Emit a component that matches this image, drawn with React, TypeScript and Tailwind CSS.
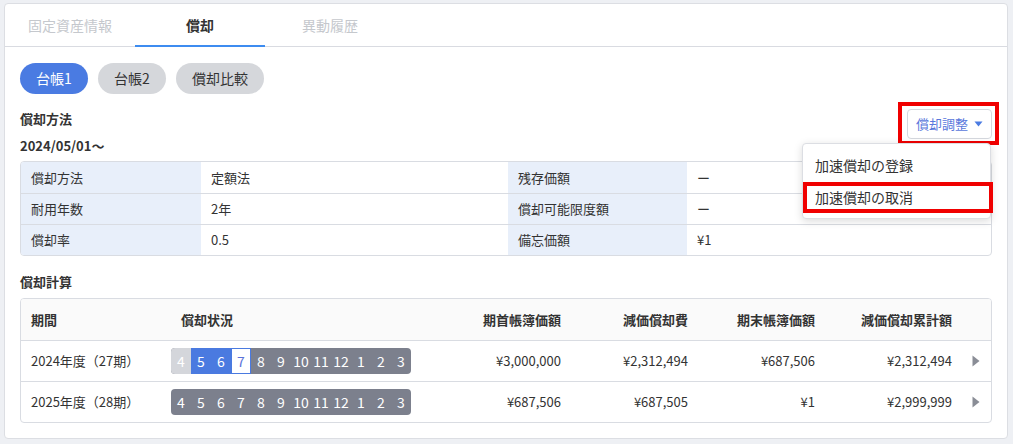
import React from 'react';

const months = ['4', '5', '6', '7', '8', '9', '10', '11', '12', '1', '2', '3'];

const MonthBar: React.FC<{ current?: boolean }> = ({ current }) => (
  <div className="flex h-[26px] w-[240px] overflow-hidden rounded-[4px] bg-[#7c808d]">
    {months.map((m, i) => {
      let cls = 'text-white';
      if (current) {
        if (i === 0) cls = 'bg-[#d4d6db] text-white';
        else if (i === 1 || i === 2) cls = 'bg-[#4a7ae0] text-white';
        else if (i === 3) cls = 'bg-white text-[#5b72d9] border border-[#4a7ae0]';
      }
      return (
        <div key={i} className={`flex w-[20px] items-center justify-center text-[14px] ${cls}`}>
          {m}
        </div>
      );
    })}
  </div>
);

const infoRows = [
  ['償却方法', '定額法', '残存価額', 'ー'],
  ['耐用年数', '2年', '償却可能限度額', 'ー'],
  ['償却率', '0.5', '備忘価額', '¥1'],
];

const calcRows = [
  { period: '2024年度（27期）', current: true, v: ['¥3,000,000', '¥2,312,494', '¥687,506', '¥2,312,494'] },
  { period: '2025年度（28期）', current: false, v: ['¥687,506', '¥687,505', '¥1', '¥2,999,999'] },
];

const gridCols = 'grid grid-cols-[150px_260px_140px_127px_127px_137px_1fr]';

export default function App() {
  return (
    <div
      className="min-h-[444px] bg-[#eef0f4] pl-[4px] pr-[5px] pt-[3px] text-[#333] text-[13px]"
      style={{ fontFamily: '"Noto Sans CJK JP", "Noto Sans", sans-serif' }}
    >
      <div className="rounded-[4px] border border-[#dcdee3] bg-white">
        {/* Tabs */}
        <div className="flex h-[43px] border-b border-[#d9dbe1]">
          <div className="flex w-[130px] items-center justify-center text-[14px] text-[#c5c8cd]">固定資産情報</div>
          <div className="relative flex w-[130px] items-center justify-center text-[14px] font-bold text-[#333]">
            償却
            <div className="absolute bottom-[-1px] left-0 h-[2px] w-full bg-[#3d8cf0]" />
          </div>
          <div className="flex w-[130px] items-center justify-center text-[14px] text-[#c5c8cd]">異動履歴</div>
        </div>

        <div className="px-[15px] pb-[15px] pt-[16px]">
          {/* Ledger pills */}
          <div className="flex gap-[10px]">
            <div className="flex h-[31px] w-[68px] items-center justify-center rounded-full bg-[#4a7be2] text-[14px] text-white">台帳1</div>
            <div className="flex h-[31px] w-[68px] items-center justify-center rounded-full bg-[#d5d7db] text-[14px] text-[#333]">台帳2</div>
            <div className="flex h-[31px] w-[88px] items-center justify-center rounded-full bg-[#d5d7db] text-[14px] text-[#333]">償却比較</div>
          </div>

          {/* Method header */}
          <div className="relative mt-[15px] flex items-start justify-between">
            <div>
              <div className="h-[19px] font-bold leading-[19px]">償却方法</div>
              <div className="mt-[8px] h-[19px] font-bold leading-[19px]">2024/05/01〜</div>
            </div>
            <div className="relative">
              <div className="flex h-[30px] w-[85px] items-center justify-center gap-[6px] rounded-[4px] border border-[#d5d8de] bg-white text-[13px] text-[#5a78dc]">
                償却調整
                <svg width="9" height="6" viewBox="0 0 9 6">
                  <path d="M0.5 0.5 L8.5 0.5 L4.5 5.5 Z" fill="#4a7be2" />
                </svg>
              </div>
              <div className="pointer-events-none absolute -left-[9px] -right-[7px] -top-[7px] -bottom-[6px] border-[4px] border-[#f00000]" />
              {/* Dropdown */}
              <div className="absolute right-[1px] top-[34px] z-10 w-[189px] rounded-[4px] border border-[#dcdee3] bg-white py-[5px] shadow-[0_2px_8px_rgba(0,0,0,0.15)]">
                <div className="flex h-[32px] items-center px-[12px] text-[14px] text-[#333]">加速償却の登録</div>
                <div className="relative flex h-[32px] items-center px-[12px] text-[14px] text-[#333]">
                  加速償却の取消
                  <div className="pointer-events-none absolute -left-[0px] -right-[3px] top-[1px] bottom-[0px] border-[4px] border-[#f00000]" />
                </div>
              </div>
            </div>
          </div>

          {/* Info table */}
          <div className="mt-[6px] overflow-hidden rounded-[4px] border border-[#d9dce2]">
            {infoRows.map((r, i) => (
              <div
                key={i}
                className={`grid h-[31px] grid-cols-[180px_307px_179px_1fr] ${i > 0 ? 'border-t border-[#d9dce2]' : ''}`}
              >
                <div className="flex items-center bg-[#e8effa] pl-[10px]">{r[0]}</div>
                <div className="flex items-center pl-[10px]">{r[1]}</div>
                <div className="flex items-center bg-[#e8effa] pl-[10px]">{r[2]}</div>
                <div className="flex items-center pl-[10px]">{r[3]}</div>
              </div>
            ))}
          </div>

          {/* Calculation */}
          <div className="mt-[16px] h-[19px] font-bold leading-[19px]">償却計算</div>
          <div className="mt-[7px] overflow-hidden rounded-[4px] border border-[#d9dce2]">
            <div className={`${gridCols} h-[41px] items-center bg-[#fafafa] font-bold`}>
              <div className="pl-[10px]">期間</div>
              <div className="pl-[10px]">償却状況</div>
              <div className="pr-[10px] text-right">期首帳簿価額</div>
              <div className="pr-[10px] text-right">減価償却費</div>
              <div className="pr-[10px] text-right">期末帳簿価額</div>
              <div className="pr-[10px] text-right">減価償却累計額</div>
              <div />
            </div>
            {calcRows.map((r, i) => (
              <div key={i} className={`${gridCols} h-[41px] items-center border-t border-[#d9dce2]`}>
                <div className="pl-[10px]">{r.period}</div>
                <div>
                  <MonthBar current={r.current} />
                </div>
                {r.v.map((v, j) => (
                  <div key={j} className="pr-[10px] text-right">{v}</div>
                ))}
                <div className="flex justify-center pr-[1px]">
                  <svg width="8" height="12" viewBox="0 0 8 12">
                    <path d="M0.5 0.5 L7.5 6 L0.5 11.5 Z" fill="#8a8d96" />
                  </svg>
                </div>
              </div>
            ))}
          </div>
        </div>
      </div>
    </div>
  );
}
